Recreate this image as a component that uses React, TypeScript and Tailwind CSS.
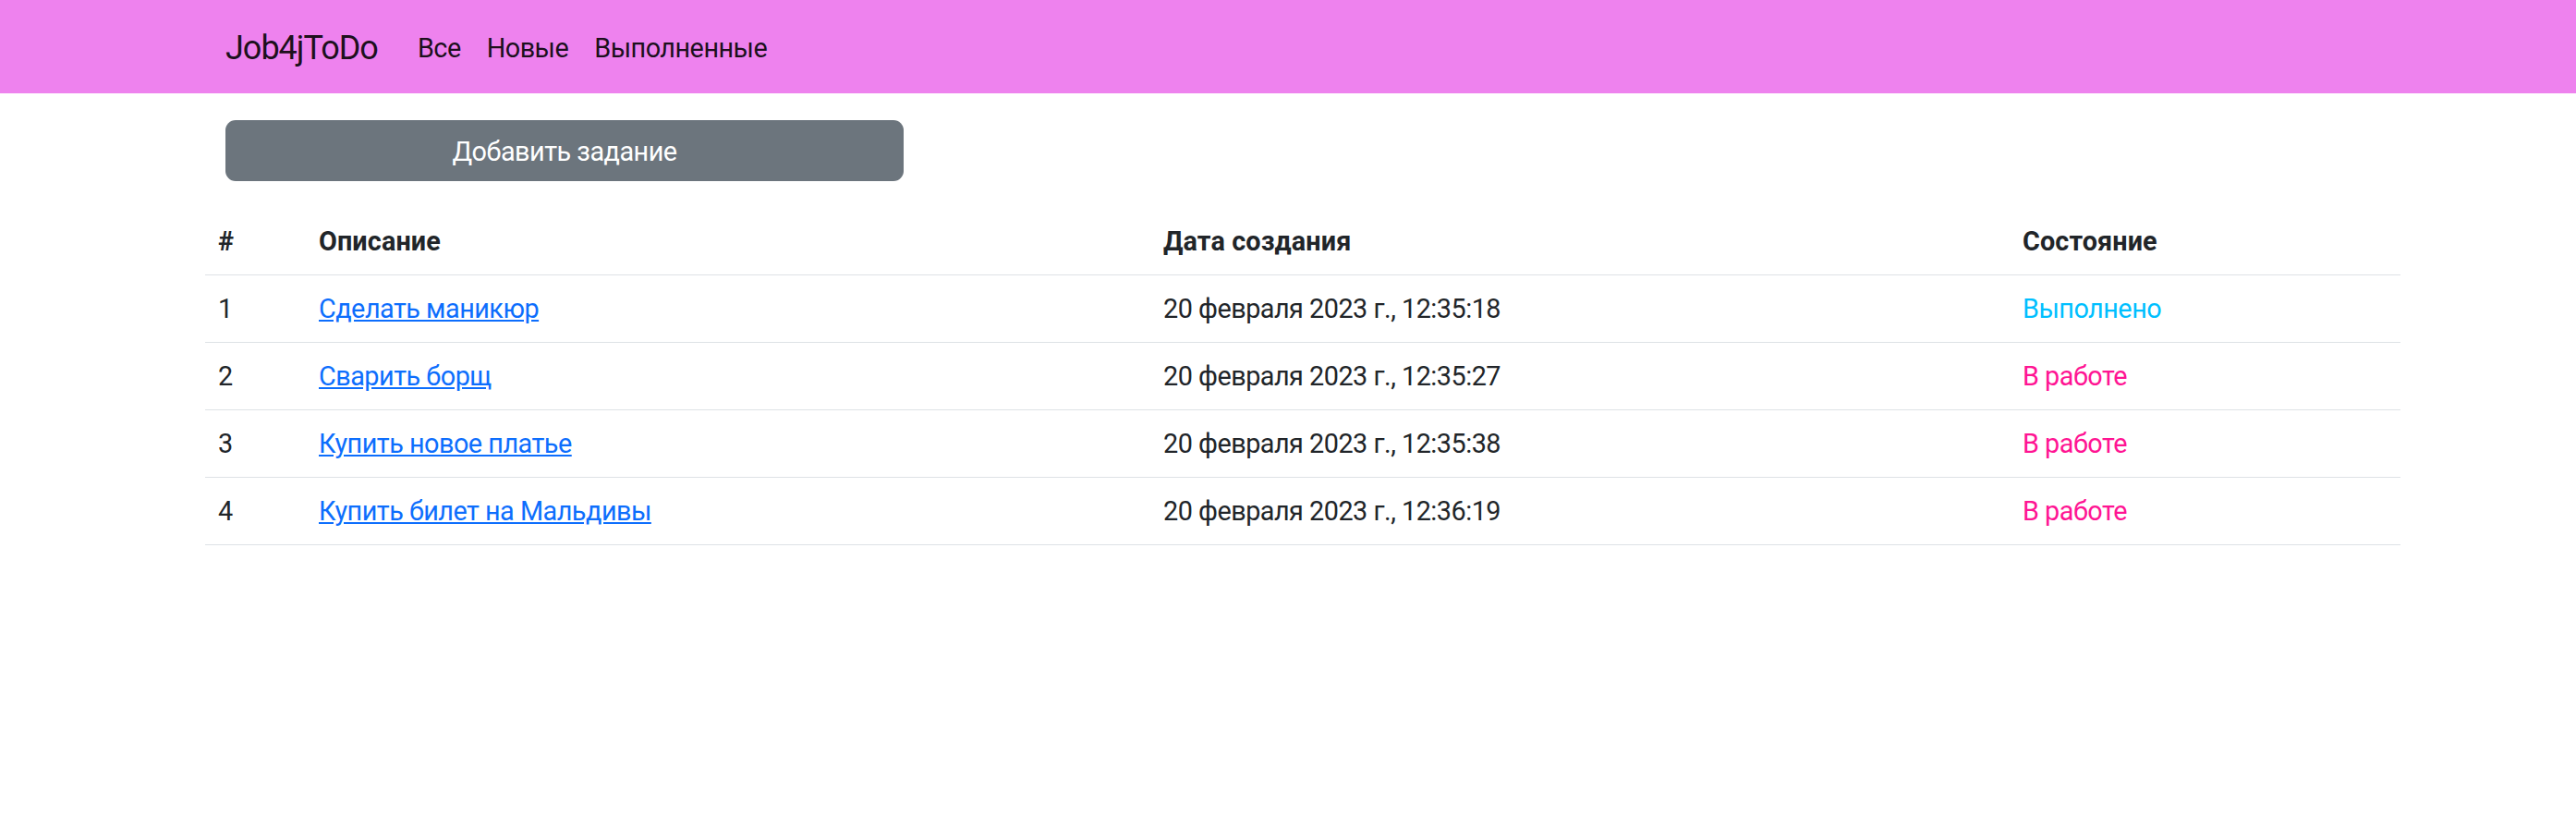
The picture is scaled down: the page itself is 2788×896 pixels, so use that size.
import React from "react";

const rows = [
  { id: 1, desc: "Сделать маникюр", date: "20 февраля 2023 г., 12:35:18", done: true },
  { id: 2, desc: "Сварить борщ", date: "20 февраля 2023 г., 12:35:27", done: false },
  { id: 3, desc: "Купить новое платье", date: "20 февраля 2023 г., 12:35:38", done: false },
  { id: 4, desc: "Купить билет на Мальдивы", date: "20 февраля 2023 г., 12:36:19", done: false },
];

export default function App() {
  return (
    <div className="min-h-[896px] bg-white text-[#212529] font-['Roboto','Noto_Sans',sans-serif]">
      <nav className="h-[101px] bg-[#ee82ee]">
        <div className="flex h-full items-center pl-[244px] pt-[3px]">
          <a className="mr-[29px] text-[36px] leading-[54px] tracking-[-1px] text-black/90">Job4jToDo</a>
          <div className="flex items-center">
            <a className="px-[14px] text-[28.8px] leading-[43px] tracking-[-0.5px] text-black/90">Все</a>
            <a className="px-[14px] text-[28.8px] leading-[43px] tracking-[-0.5px] text-black/90">Новые</a>
            <a className="px-[14px] text-[28.8px] leading-[43px] tracking-[-0.5px] text-black/90">Выполненные</a>
          </div>
        </div>
      </nav>
      <div className="w-[2598px] pl-[222px]">
        <div className="pl-[22px] pt-[29px]">
          <button className="flex h-[66px] w-[734px] items-center justify-center rounded-[11px] bg-[#6c757d] pt-[2px] text-[28.8px] leading-[43px] tracking-[-0.5px] text-white">
            Добавить задание
          </button>
        </div>
        <table className="mt-[29px] w-[2376px] table-fixed border-collapse text-[28.8px] leading-[43.2px]">
          <colgroup>
            <col className="w-[109px]" />
            <col className="w-[914px]" />
            <col className="w-[930px]" />
            <col className="w-[423px]" />
          </colgroup>
          <thead>
            <tr className="border-b border-[#dee2e6]">
              <th className="px-[14px] pb-[13.4px] pt-[15.4px] text-left font-bold tracking-[0.1px]">#</th>
              <th className="px-[14px] pb-[13.4px] pt-[15.4px] text-left font-bold tracking-[0.1px]">Описание</th>
              <th className="px-[14px] pb-[13.4px] pt-[15.4px] text-left font-bold tracking-[0.1px]">Дата создания</th>
              <th className="px-[14px] pb-[13.4px] pt-[15.4px] text-left font-bold tracking-[0.1px]">Состояние</th>
            </tr>
          </thead>
          <tbody className="tracking-[-0.5px]">
            {rows.map((r) => (
              <tr key={r.id} className="border-b border-[#dee2e6]">
                <td className="px-[14px] pb-[13.4px] pt-[15.4px]">{r.id}</td>
                <td className="px-[14px] pb-[13.4px] pt-[15.4px]">
                  <a className="text-[#0d6efd] underline">{r.desc}</a>
                </td>
                <td className="px-[14px] pb-[13.4px] pt-[15.4px]">{r.date}</td>
                <td className={"px-[14px] pb-[13.4px] pt-[15.4px] " + (r.done ? "text-[#00bfff]" : "text-[#ff1493]")}>
                  {r.done ? "Выполнено" : "В работе"}
                </td>
              </tr>
            ))}
          </tbody>
        </table>
      </div>
    </div>
  );
}
